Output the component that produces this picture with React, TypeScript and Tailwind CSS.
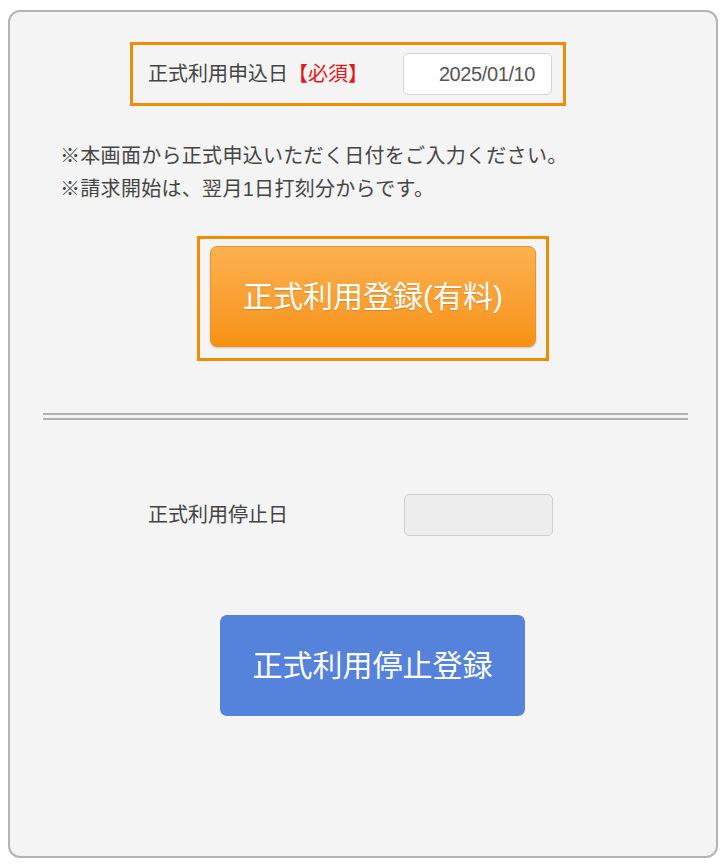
import React from "react";

const font = "font-['Liberation_Sans','Noto_Sans_CJK_JP',sans-serif]";

const App: React.FC = () => {
  return (
    <div className={`min-h-screen bg-white pt-[10px] ${font}`}>
      <div className="ml-[8px] flex h-[848px] w-[710px] flex-col rounded-[12px] border-2 border-[#b4b4b4] bg-[#f4f4f4]">
        {/* 申込日 */}
        <div className="ml-[120px] mt-[30px] flex h-[64px] w-[436px] items-center border-[3px] border-[#f08c00] pl-[15px] pr-[11px]">
          <span className="text-[20px] leading-none text-[#444]">
            正式利用申込日
            <span className="text-[#e8141b]">【必須】</span>
          </span>
          <div className="ml-auto flex h-[42px] w-[149px] items-center justify-end rounded-[5px] border border-[#d4d4d4] bg-white pr-[16px] text-[20px] tracking-[-0.4px] text-[#555]">
            2025/01/10
          </div>
        </div>

        <div className="ml-[50px] mt-[34px] text-[20px] leading-[33px] tracking-[0.3px] text-[#444]">
          <p>※本画面から正式申込いただく日付をご入力ください。</p>
          <p>※請求開始は、翌月1日打刻分からです。</p>
        </div>

        <div className="ml-[187px] mt-[30px] h-[125px] w-[352px] border-[3px] border-[#f08c00] pb-[11px] pl-[10px] pr-[10px] pt-[7px]">
          <button className="flex h-full w-full items-center justify-center rounded-[7px] border border-[#eb9220] bg-gradient-to-b from-[#fbb24f] to-[#f7910c] text-[30px] text-white shadow-[0_1px_2px_rgba(0,0,0,0.2)] [text-shadow:0_1px_1px_rgba(0,0,0,0.15)]">
            正式利用登録(有料)
          </button>
        </div>

        <div className="ml-[33px] mt-[52px] h-[7px] w-[645px] border-y-2 border-[#b0b0b0]" />

        <div className="ml-[138px] mt-[74px] flex h-[42px] items-center">
          <span className="w-[256px] text-[20px] text-[#444]">正式利用停止日</span>
          <div className="h-[42px] w-[149px] rounded-[5px] border border-[#cfcfcf] bg-[#ededed]" />
        </div>

        <button className="ml-[210px] mt-[79px] flex h-[101px] w-[305px] items-center justify-center rounded-[7px] bg-[#5582da] text-[30px] text-white">
          正式利用停止登録
        </button>
      </div>
    </div>
  );
};

export default App;
